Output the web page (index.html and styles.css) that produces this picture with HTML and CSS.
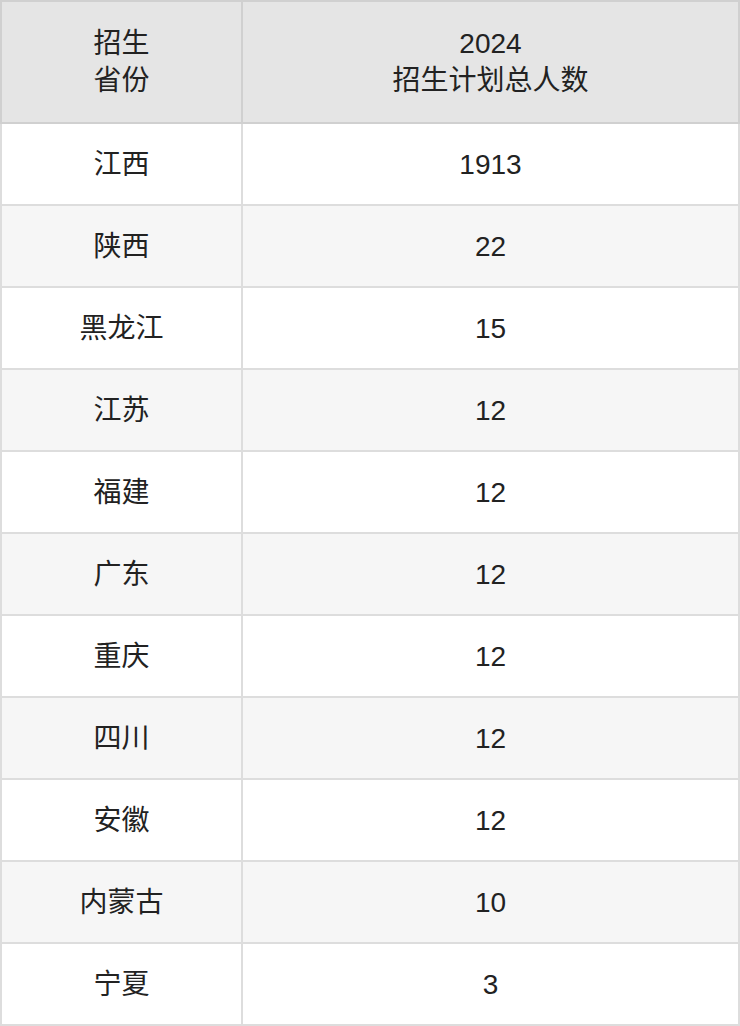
FILE: index.html
```html
<!DOCTYPE html>
<html lang="zh">
<head>
<meta charset="utf-8">
<link rel="stylesheet" href="styles.css">
</head>
<body>
<table class="plan">
  <thead>
    <tr>
      <th class="col-prov">招生<br>省份</th>
      <th class="col-num">2024<br>招生计划总人数</th>
    </tr>
  </thead>
  <tbody>
    <tr><td>江西</td><td>1913</td></tr>
    <tr><td>陕西</td><td>22</td></tr>
    <tr><td>黑龙江</td><td>15</td></tr>
    <tr><td>江苏</td><td>12</td></tr>
    <tr><td>福建</td><td>12</td></tr>
    <tr><td>广东</td><td>12</td></tr>
    <tr><td>重庆</td><td>12</td></tr>
    <tr><td>四川</td><td>12</td></tr>
    <tr><td>安徽</td><td>12</td></tr>
    <tr><td>内蒙古</td><td>10</td></tr>
    <tr><td>宁夏</td><td>3</td></tr>
  </tbody>
</table>
</body>
</html>
```

FILE: styles.css
```css
html, body {
  margin: 0;
  padding: 0;
  background: #ffffff;
}
.plan {
  width: 740px;
  border-collapse: collapse;
  table-layout: fixed;
  font-family: "Liberation Sans", "Noto Sans CJK SC", sans-serif;
  font-size: 28px;
  color: #222222;
}
.plan th, .plan td {
  border: 2px solid #dddddd;
  text-align: center;
  vertical-align: middle;
  padding: 0;
}
.plan th {
  background: #e5e5e5;
  font-weight: normal;
  height: 120px;
  line-height: 37px;
  border-color: #d0d0d0;
}
.col-prov { width: 239px; }
.plan td {
  height: 78px;
  line-height: 34px;
  padding-top: 2px;
}
.plan tbody tr:nth-child(even) td {
  background: #f6f6f6;
}
```
